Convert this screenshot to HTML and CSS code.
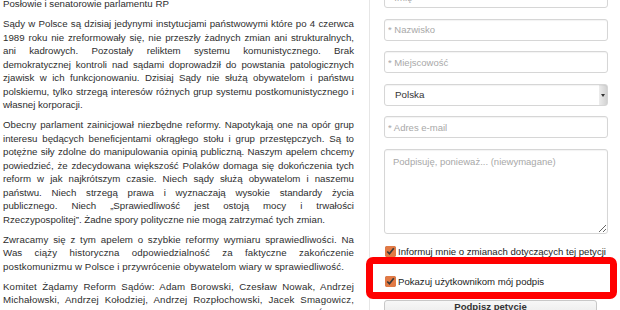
FILE: index.html
```html
<!DOCTYPE html>
<html lang="pl">
<head>
    <meta charset="UTF-8">
    <meta name="viewport" content="width=device-width, initial-scale=1.0">
    <title>Petycja - Żądamy Reform Sądów</title>
    <link rel="stylesheet" href="styles.css">
</head>
<body>
    <div class="page">
        <div class="appeal">
            <p>Posłowie i senatorowie parlamentu RP</p>
            <p>Sądy w Polsce są dzisiaj jedynymi instytucjami państwowymi które po 4 czerwca 1989 roku nie zreformowały się, nie przeszły żadnych zmian ani strukturalnych, ani kadrowych. Pozostały reliktem systemu komunistycznego. Brak demokratycznej kontroli nad sądami doprowadził do powstania patologicznych zjawisk w ich funkcjonowaniu. Dzisiaj Sądy nie służą obywatelom i państwu polskiemu, tylko strzegą interesów różnych grup systemu postkomunistycznego i własnej korporacji.</p>
            <p>Obecny parlament zainicjował niezbędne reformy. Napotykają one na opór grup interesu będących beneficjentami okrągłego stołu i grup przestępczych. Są to potężne siły zdolne do manipulowania opinią publiczną. Naszym apelem chcemy powiedzieć, że zdecydowana większość Polaków domaga się dokończenia tych reform w jak najkrótszym czasie. Niech sądy służą obywatelom i naszemu państwu. Niech strzegą prawa i wyznaczają wysokie standardy życia publicznego. Niech „Sprawiedliwość jest ostoją mocy i trwałości Rzeczypospolitej”. Żadne spory polityczne nie mogą zatrzymać tych zmian.</p>
            <p class="loose">Zwracamy się z tym apelem o szybkie reformy wymiaru sprawiedliwości. Na Was ciąży historyczna odpowiedzialność za faktyczne zakończenie postkomunizmu w Polsce i przywrócenie obywatelom wiary w sprawiedliwość.</p>
            <p class="signers">Komitet Żądamy Reform Sądów: Adam Borowski, Czesław Nowak, Andrzej Michałowski, Andrzej Kołodziej, Andrzej Rozpłochowski, Jacek Smagowicz, Jerzy Langer, Tomasz Olko, Roman Bielański, Emil Praniszek, Wiktor Świetlik, Jan Pietrzak.</p>
        </div>

        <form class="sign-form">
            <input class="field" type="text" placeholder="* Imię">
            <input class="field" type="text" placeholder="* Nazwisko">
            <input class="field" type="text" placeholder="* Miejscowość">
            <div class="select-wrap">
                <select class="field select">
                    <option>Polska</option>
                </select>
            </div>
            <input class="field" type="email" placeholder="* Adres e-mail">
            <textarea class="field note" placeholder="Podpisuję, ponieważ... (niewymagane)"></textarea>

            <label class="check"><input type="checkbox" checked> Informuj mnie o zmianach dotyczących tej petycji</label>
            <div class="highlight">
                <label class="check"><input type="checkbox" checked> Pokazuj użytkownikom mój podpis</label>
            </div>

            <button class="submit" type="button">Podpisz petycję</button>
        </form>
    </div>
</body>
</html>
```

FILE: styles.css
```css
body {
    margin: 0;
    padding: 0;
    background-color: #fff;
    color: #333;
    font-family: 'Liberation Sans', Arial, sans-serif;
    overflow: hidden;
}

.page {
    display: flex;
    margin-top: -14px;
}

.appeal {
    width: 351px;
    padding: 11px 15px 0 3px;
    font-size: 9.7px;
    line-height: 13.5px;
    text-align: justify;
    color: #2e2e2e;
}

.appeal p {
    margin: 0 0 6.5px;
}

.appeal .loose {
    letter-spacing: 0.1px;
}

.appeal .signers {
    letter-spacing: 0.15px;
}

.sign-form {
    width: 224px;
    padding: 0 12px 0 14px;
    border-left: 1px solid #e6e6e6;
    display: flex;
    flex-direction: column;
}

.field {
    box-sizing: border-box;
    width: 100%;
    height: 22px;
    margin: 0 0 10.5px;
    padding: 0 3px;
    border: 1px solid #d6d6d6;
    border-radius: 3px;
    box-shadow: inset 0 1px 1px rgba(0, 0, 0, 0.05);
    background-color: #fff;
    font-family: 'Liberation Sans', Arial, sans-serif;
    font-size: 9.5px;
    color: #333;
}

.field::placeholder {
    color: #a8a8a8;
}

.select-wrap {
    position: relative;
}

.select {
    appearance: none;
    -webkit-appearance: none;
    padding-left: 10px;
    font-size: 9.8px;
    background: linear-gradient(to right, #fff 0, #fff calc(100% - 8px), #ececec calc(100% - 8px), #d2d2d2 100%);
}

.select-wrap::after {
    content: "";
    position: absolute;
    right: 3px;
    top: 10px;
    border-left: 2px solid transparent;
    border-right: 2px solid transparent;
    border-top: 3px solid #333;
}

.note {
    height: 85px;
    padding: 6px 8px;
    resize: vertical;
}

.check {
    display: flex;
    align-items: center;
    height: 14px;
    font-size: 9.6px;
    color: #222;
    white-space: nowrap;
}

.check input {
    width: 11px;
    height: 11px;
    margin: 0 2px 0 1px;
    accent-color: #e27a45;
}

.highlight {
    position: relative;
    margin-top: 16px;
}

.highlight::before {
    content: "";
    position: absolute;
    left: -18px;
    right: -9px;
    top: -17px;
    bottom: -11px;
    border: 7px solid #f00;
    border-radius: 7px;
}

.submit {
    width: 213px;
    height: 24px;
    margin-top: 12px;
    padding: 0 0 14px;
    border: 1px solid #c8c8c8;
    border-radius: 3px;
    background: linear-gradient(#f7f7f7, #e4e4e4);
    font-family: 'Liberation Sans', Arial, sans-serif;
    font-size: 9.6px;
    font-weight: bold;
    color: #333;
}
```
